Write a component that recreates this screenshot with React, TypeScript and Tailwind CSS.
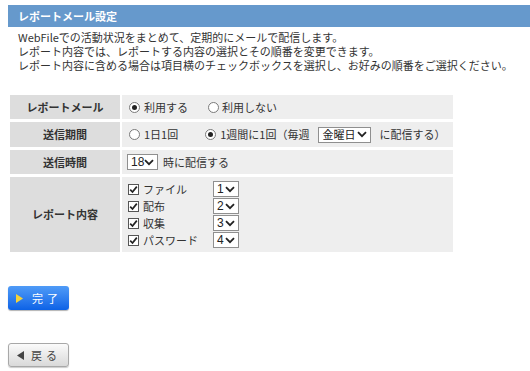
import React from "react";

const FONT = { fontFamily: '"Noto Sans CJK JP", "Noto Sans", sans-serif' };

function Radio({ checked }: { checked?: boolean }) {
  return (
    <span className="inline-flex h-[11px] w-[11px] items-center justify-center rounded-full border border-[#7a7a7a] bg-white">
      {checked && <span className="h-[5px] w-[5px] rounded-full bg-[#222]" />}
    </span>
  );
}

function Check() {
  return (
    <span className="inline-flex h-[11px] w-[11px] items-center justify-center border border-[#555] bg-white">
      <svg width="9" height="9" viewBox="0 0 9 9">
        <path d="M1.2 4.6 L3.5 7 L7.8 1.6" stroke="#222" strokeWidth="1.7" fill="none" />
      </svg>
    </span>
  );
}

function Chevron() {
  return (
    <svg width="10" height="7" viewBox="0 0 10 7" className="shrink-0">
      <path d="M1 1.2 L5 5.2 L9 1.2" stroke="#222" strokeWidth="1.8" fill="none" />
    </svg>
  );
}

function Select({ value, w, cjk }: { value: string; w: string; cjk?: boolean }) {
  return (
    <span
      className={`inline-flex h-[16px] shrink-0 items-center justify-between whitespace-nowrap border border-[#8f8f8f] bg-white pl-[3px] pr-[3px] text-[#222] ${cjk ? "text-[11px]" : "text-[12px]"} ${w}`}
      style={cjk ? FONT : { fontFamily: '"Liberation Sans", Arial, sans-serif' }}
    >
      <span className="leading-none">{value}</span>
      <Chevron />
    </span>
  );
}

export default function App() {
  return (
    <div className="min-h-[371px] w-[530px] bg-white text-[11px] text-[#333]" style={FONT}>
      <div className="pt-[5px] pl-[8px]">
        <div className="flex h-[22px] items-center bg-[#6699cc] pl-[10px] text-[11px] font-bold text-white">
          レポートメール設定
        </div>
      </div>
      <div className="pl-[18px] pt-[3px] leading-[14px]">
        <div>WebFileでの活動状況をまとめて、定期的にメールで配信します。</div>
        <div>レポート内容では、レポートする内容の選択とその順番を変更できます。</div>
        <div>レポート内容に含める場合は項目横のチェックボックスを選択し、お好みの順番をご選択ください。</div>
      </div>
      <div className="pl-[8px] pt-[20px]">
        <table className="border-separate border-spacing-x-[2px] border-spacing-y-[3px]">
          <tbody>
            <tr>
              <th className="h-[24px] w-[110px] bg-[#dddddd] p-0 text-center text-[11px] font-bold text-[#333]">レポートメール</th>
              <td className="h-[24px] w-[331px] bg-[#eeeeee] p-0 pl-[7px]">
                <div className="flex items-center whitespace-nowrap">
                  <Radio checked />
                  <span className="ml-[4px]">利用する</span>
                  <span className="ml-[20px] flex"><Radio /></span>
                  <span className="ml-[3px]">利用しない</span>
                </div>
              </td>
            </tr>
            <tr>
              <th className="h-[25px] bg-[#dddddd] p-0 text-center text-[11px] font-bold text-[#333]">送信期間</th>
              <td className="h-[25px] bg-[#eeeeee] p-0 pl-[7px]">
                <div className="flex items-center whitespace-nowrap">
                  <Radio />
                  <span className="ml-[4px]">1日1回</span>
                  <span className="ml-[27px] flex"><Radio checked /></span>
                  <span className="ml-[4px]">1週間に1回（毎週</span>
                  <span className="ml-[9px] flex"><Select value="金曜日" w="w-[53px]" cjk /></span>
                  <span className="ml-[8px]">に配信する）</span>
                </div>
              </td>
            </tr>
            <tr>
              <th className="h-[24px] bg-[#dddddd] p-0 text-center text-[11px] font-bold text-[#333]">送信時間</th>
              <td className="h-[24px] bg-[#eeeeee] p-0 pl-[5px]">
                <div className="flex items-center whitespace-nowrap">
                  <Select value="18" w="w-[31px]" />
                  <span className="ml-[5px]">時に配信する</span>
                </div>
              </td>
            </tr>
            <tr>
              <th className="h-[75px] bg-[#dddddd] p-0 text-center text-[11px] font-bold text-[#333]">レポート内容</th>
              <td className="h-[75px] bg-[#eeeeee] p-0 pl-[5px]">
                <div className="flex flex-col gap-[1px]">
                  {[
                    ["ファイル", "1"],
                    ["配布", "2"],
                    ["収集", "3"],
                    ["パスワード", "4"],
                  ].map(([label, n]) => (
                    <div key={n} className="flex h-[16px] items-center whitespace-nowrap">
                      <span className="ml-[1px] flex"><Check /></span>
                      <span className="ml-[4px] w-[70px]">{label}</span>
                      <Select value={n} w="w-[26px]" />
                    </div>
                  ))}
                </div>
              </td>
            </tr>
          </tbody>
        </table>
      </div>
      <div className="pl-[8px] pt-[31px]">
        <button className="flex h-[24px] w-[61px] items-center rounded-[3px] bg-gradient-to-b from-[#4f9bf7] to-[#0b62e6] pl-[8px] text-[11px] text-white shadow-[0_1px_1px_rgba(0,0,0,0.3)]">
          <svg width="7" height="9" viewBox="0 0 7 9"><path d="M0 0 L7 4.5 L0 9 Z" fill="#f5d23a" /></svg>
          <span className="ml-[9px] tracking-[4px]">完了</span>
        </button>
      </div>
      <div className="pl-[8px] pt-[33px]">
        <button className="flex h-[24px] w-[61px] items-center rounded-[3px] border border-[#a8a8a8] bg-gradient-to-b from-[#fbfbfb] to-[#d9d9d9] pl-[8px] text-[11px] text-[#444] shadow-[0_1px_1px_rgba(0,0,0,0.2)]">
          <svg width="7" height="9" viewBox="0 0 7 9"><path d="M7 0 L0 4.5 L7 9 Z" fill="#444" /></svg>
          <span className="ml-[7px] tracking-[4px]">戻る</span>
        </button>
      </div>
    </div>
  );
}
